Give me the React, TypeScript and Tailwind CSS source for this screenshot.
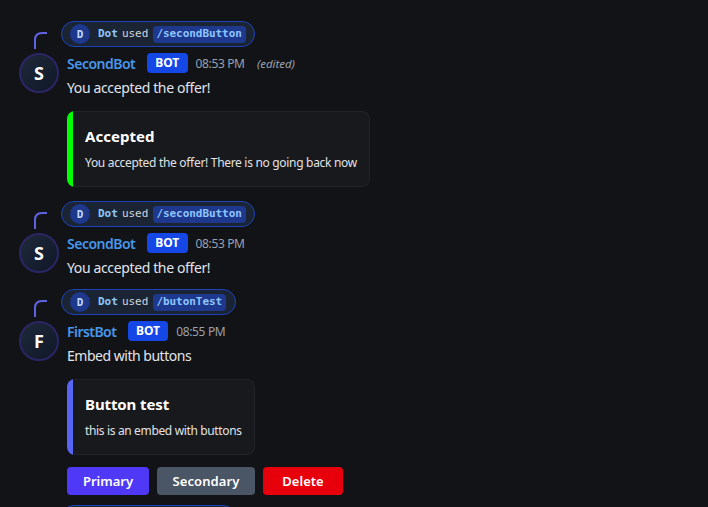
import type { ReactNode } from "react";

type MessageProps = {
  bot: string;
  nameClass: string;
  command: string;
  pillClass: string;
  time: string;
  edited?: boolean;
  content: string;
  contentClass: string;
  className: string;
  children?: ReactNode;
};

function CommandPill({ command, className }: { command?: string; className: string }) {
  return (
    <div
      className={`ml-[61px] flex h-[26px] shrink-0 items-center rounded-full border border-[#1d43ba] bg-[#1b2433] pl-2 font-['DejaVu_Sans_Mono',monospace] text-[11px] leading-4 whitespace-nowrap ${className}`}
    >
      {command && (
        <>
          <span className="flex size-5 shrink-0 items-center justify-center rounded-full bg-[#1d388c] pt-px text-[11px] font-bold text-[#bedbff]">
            D
          </span>
          <span className="ml-2 font-bold text-[#8ec5ff]">Dot</span>
          <span className="ml-1 text-[#d1d5dc]">used</span>
          <span className="ml-[5px] flex h-[17px] items-center rounded-[4px] bg-[#1d388c] pr-1 pl-[3px] font-bold tracking-[-0.05px] text-[#8ec5ff]">
            {command}
          </span>
        </>
      )}
    </div>
  );
}

function Message({ bot, nameClass, command, pillClass, time, edited, content, contentClass, className, children }: MessageProps) {
  return (
    <article className={`shrink-0 ${className}`}>
      <div className="relative">
        <svg className="absolute left-[33px] top-[10px]" width="16" height="19" fill="none" stroke="#5f63df" strokeWidth="2">
          <path d="M2 18V9Q2 2 9 2H14" />
        </svg>
        <CommandPill command={command} className={pillClass} />
      </div>
      <div className="mt-[6px] flex pl-[19px]">
        <div className="flex size-10 shrink-0 items-center justify-center rounded-full border-2 border-[#2c2565] bg-linear-to-br from-[#1e2939] to-[#101828] text-[18px] leading-6 font-bold text-white">
          {bot[0]}
        </div>
        <div className="ml-2">
          <div className="flex h-5 items-center whitespace-nowrap">
            <span className={`pt-px text-[14px] leading-5 font-semibold text-[#4897ea] ${nameClass}`}>{bot}</span>
            <span className="ml-3 flex h-5 w-[40.5px] items-center justify-center rounded-[4px] bg-[#1447e6] text-[12px] font-bold text-white">
              BOT
            </span>
            <span className="ml-2 w-[49.5px] pt-px text-[12px] tracking-[-0.35px] text-[#99a1af]">{time}</span>
            {edited && <span className="ml-3 pt-px text-[11.5px] tracking-[-0.05px] text-[#99a1af] italic">(edited)</span>}
          </div>
          <p className={`mt-1 h-5 pt-px text-[14px] leading-5 whitespace-nowrap text-[#e0e5ec] ${contentClass}`}>{content}</p>
          {children}
        </div>
      </div>
    </article>
  );
}

type EmbedProps = { title: string; text: string; className: string; stripe: string; titleClass: string; textClass: string };

function Embed({ title, text, className, stripe, titleClass, textClass }: EmbedProps) {
  return (
    <div className={`mt-[14px] flex h-[76px] overflow-hidden rounded-lg bg-[#18191c] ${className}`}>
      <div className={`w-[6px] shrink-0 ${stripe}`} />
      <div className="flex-1 rounded-r-lg border border-l-0 border-[#222429] pt-3 pl-3 whitespace-nowrap">
        <h3 className={`text-[15px] leading-6 font-bold text-white ${titleClass}`}>{title}</h3>
        <p className={`mt-[5px] text-[12px] leading-5 text-[#e0e2e6] ${textClass}`}>{text}</p>
      </div>
    </div>
  );
}

export default function App() {
  return (
    <main className="flex h-[507px] w-[708px] flex-col overflow-hidden bg-[#121316] pt-[21px] font-['Noto_Sans','Open_Sans',sans-serif]">
      <Message
        className="h-[180px]"
        bot="SecondBot"
        nameClass="w-[68px] tracking-[-0.5px]"
        command="/secondButton"
        pillClass="w-[194px]"
        time="08:53 PM"
        edited
        content="You accepted the offer!"
        contentClass="tracking-[-0.37px]"
      >
        <Embed
          title="Accepted"
          text="You accepted the offer! There is no going back now"
          className="w-[303px]"
          stripe="bg-[#00ff00]"
          titleClass="tracking-[0.05px]"
          textClass="tracking-[-0.31px]"
        />
      </Message>
      <Message
        className="h-[88px]"
        bot="SecondBot"
        nameClass="w-[68px] tracking-[-0.5px]"
        command="/secondButton"
        pillClass="w-[194px]"
        time="08:53 PM"
        content="You accepted the offer!"
        contentClass="tracking-[-0.37px]"
      />
      <Message
        className="h-[216px]"
        bot="FirstBot"
        nameClass="w-[48.7px] tracking-[-0.55px]"
        command="/butonTest"
        pillClass="w-[175px]"
        time="08:55 PM"
        content="Embed with buttons"
        contentClass="tracking-[-0.48px]"
      >
        <Embed
          title="Button test"
          text="this is an embed with buttons"
          className="w-[188px]"
          stripe="bg-[#5865f2]"
          titleClass="tracking-[-0.1px]"
          textClass="tracking-[-0.35px]"
        />
        <div className="mt-3 flex gap-2 text-[13px] leading-5 font-semibold text-white">
          <button className="h-7 w-[82px] rounded-[4px] bg-[#4f39f6]">Primary</button>
          <button className="h-7 w-[98px] rounded-[4px] bg-[#4a5565] tracking-[0.12px]">Secondary</button>
          <button className="h-7 w-[80px] rounded-[4px] bg-[#e7000b]">Delete</button>
        </div>
      </Message>
      <CommandPill className="w-[175px]" />
    </main>
  );
}
